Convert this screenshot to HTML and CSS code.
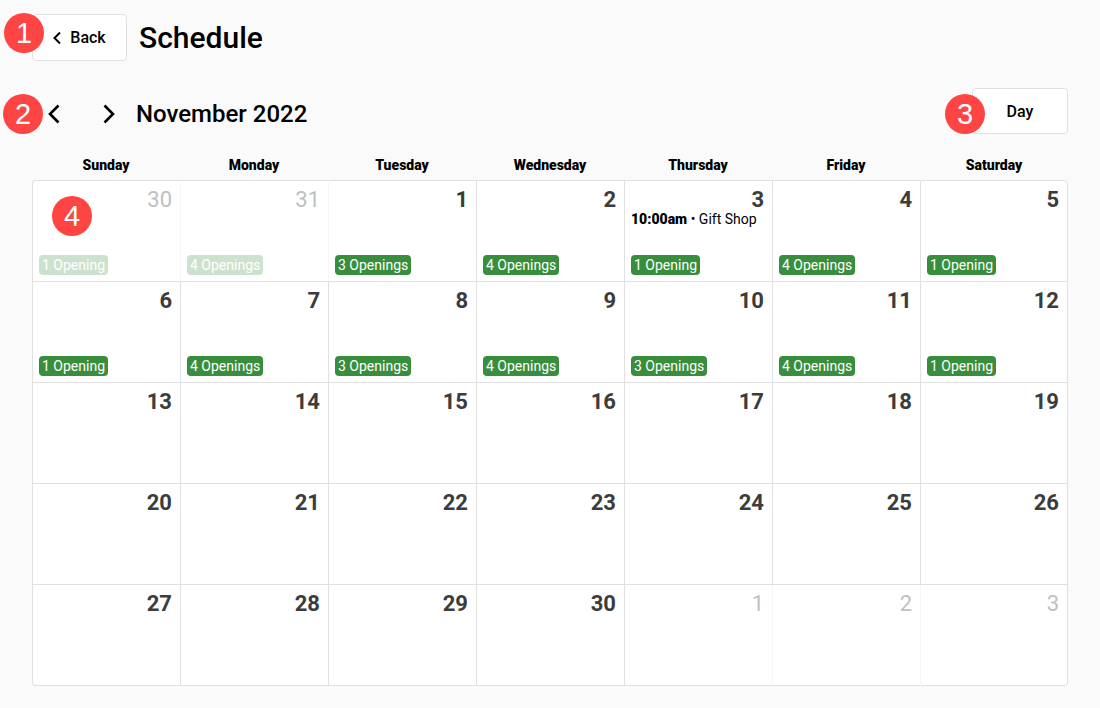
FILE: index.html
```html
<!DOCTYPE html>
<html lang="en">
<head>
    <meta charset="UTF-8">
    <meta name="viewport" content="width=device-width, initial-scale=1.0">
    <title>Schedule</title>
    <link rel="stylesheet" href="styles.css">
</head>
<body>
    <header class="page-header">
        <div class="marked">
            <button type="button" class="btn back-btn">
                <svg class="back-icon" viewBox="0 0 8 12" aria-hidden="true"><path d="M7 0.5 L1.5 6 L7 11.5"/></svg>
                Back
            </button>
            <span class="marker marker-back">1</span>
        </div>
        <h1>Schedule</h1>
    </header>

    <main>
        <div class="toolbar">
            <div class="marked month-nav">
                <button type="button" class="nav-btn" aria-label="Previous month">
                    <svg class="nav-icon" viewBox="0 0 12 20" aria-hidden="true"><path d="M10.5 1.5 L2 10 L10.5 18.5"/></svg>
                </button>
                <button type="button" class="nav-btn" aria-label="Next month">
                    <svg class="nav-icon" viewBox="0 0 12 20" aria-hidden="true"><path d="M1.5 1.5 L10 10 L1.5 18.5"/></svg>
                </button>
                <span class="marker marker-nav">2</span>
            </div>
            <h2>November 2022</h2>
            <div class="marked view-switch">
                <button type="button" class="btn">Day</button>
                <span class="marker marker-view">3</span>
            </div>
        </div>

        <table class="calendar">
            <thead>
                <tr>
                    <th>Sunday</th>
                    <th>Monday</th>
                    <th>Tuesday</th>
                    <th>Wednesday</th>
                    <th>Thursday</th>
                    <th>Friday</th>
                    <th>Saturday</th>
                </tr>
            </thead>
            <tbody>
                <tr>
                    <td class="other-month"><div class="day"><span class="date">30</span><span class="openings">1 Opening</span><span class="marker marker-cell">4</span></div></td>
                    <td class="other-month"><div class="day"><span class="date">31</span><span class="openings">4 Openings</span></div></td>
                    <td><div class="day"><span class="date">1</span><span class="openings">3 Openings</span></div></td>
                    <td><div class="day"><span class="date">2</span><span class="openings">4 Openings</span></div></td>
                    <td>
                        <div class="day">
                            <span class="date">3</span>
                            <p class="event"><b>10:00am</b> • Gift Shop</p>
                            <span class="openings">1 Opening</span>
                        </div>
                    </td>
                    <td><div class="day"><span class="date">4</span><span class="openings">4 Openings</span></div></td>
                    <td><div class="day"><span class="date">5</span><span class="openings">1 Opening</span></div></td>
                </tr>
                <tr>
                    <td><div class="day"><span class="date">6</span><span class="openings">1 Opening</span></div></td>
                    <td><div class="day"><span class="date">7</span><span class="openings">4 Openings</span></div></td>
                    <td><div class="day"><span class="date">8</span><span class="openings">3 Openings</span></div></td>
                    <td><div class="day"><span class="date">9</span><span class="openings">4 Openings</span></div></td>
                    <td><div class="day"><span class="date">10</span><span class="openings">3 Openings</span></div></td>
                    <td><div class="day"><span class="date">11</span><span class="openings">4 Openings</span></div></td>
                    <td><div class="day"><span class="date">12</span><span class="openings">1 Opening</span></div></td>
                </tr>
                <tr>
                    <td><div class="day"><span class="date">13</span></div></td>
                    <td><div class="day"><span class="date">14</span></div></td>
                    <td><div class="day"><span class="date">15</span></div></td>
                    <td><div class="day"><span class="date">16</span></div></td>
                    <td><div class="day"><span class="date">17</span></div></td>
                    <td><div class="day"><span class="date">18</span></div></td>
                    <td><div class="day"><span class="date">19</span></div></td>
                </tr>
                <tr>
                    <td><div class="day"><span class="date">20</span></div></td>
                    <td><div class="day"><span class="date">21</span></div></td>
                    <td><div class="day"><span class="date">22</span></div></td>
                    <td><div class="day"><span class="date">23</span></div></td>
                    <td><div class="day"><span class="date">24</span></div></td>
                    <td><div class="day"><span class="date">25</span></div></td>
                    <td><div class="day"><span class="date">26</span></div></td>
                </tr>
                <tr>
                    <td><div class="day"><span class="date">27</span></div></td>
                    <td><div class="day"><span class="date">28</span></div></td>
                    <td><div class="day"><span class="date">29</span></div></td>
                    <td><div class="day"><span class="date">30</span></div></td>
                    <td class="other-month"><div class="day"><span class="date">1</span></div></td>
                    <td class="other-month"><div class="day"><span class="date">2</span></div></td>
                    <td class="other-month"><div class="day"><span class="date">3</span></div></td>
                </tr>
            </tbody>
        </table>
    </main>
</body>
</html>
```
FILE: styles.css
```css
* {
    box-sizing: border-box;
}

body {
    margin: 0;
    padding: 14px 32px 22px;
    background-color: #fafafa;
    color: #000;
    font-family: Roboto, sans-serif;
    font-size: 14px;
}

h1, h2, p {
    margin: 0;
}

h1 {
    font-size: 30px;
    line-height: 40px;
    font-weight: 500;
}

h2 {
    font-size: 24px;
    line-height: 32px;
    font-weight: 500;
}

.page-header {
    display: flex;
    align-items: center;
    gap: 12px;
}

/* Buttons */
.btn {
    display: flex;
    align-items: center;
    justify-content: center;
    gap: 9px;
    width: 96px;
    height: 46px;
    padding: 0;
    background-color: #fff;
    border: 1px solid #e0e0e0;
    border-radius: 4px;
    color: #000;
    font-family: inherit;
    font-size: 16px;
    font-weight: 500;
    cursor: pointer;
}

.back-btn {
    width: 95px;
    height: 47px;
}

.back-icon {
    width: 8px;
    height: 12px;
    fill: none;
    stroke: #000;
    stroke-width: 2;
}

.nav-btn {
    display: flex;
    padding: 0;
    background: none;
    border: none;
    cursor: pointer;
}

.nav-icon {
    width: 12px;
    height: 20px;
    fill: none;
    stroke: #000;
    stroke-width: 2.6;
}

/* Month row */
.toolbar {
    display: flex;
    align-items: center;
    margin-top: 27px;
}

.month-nav {
    display: flex;
    gap: 43px;
    padding: 6px 21px 0 16px;
}

.toolbar h2 {
    padding-top: 6px;
}

.view-switch {
    margin-left: auto;
}

/* Numbered markers lying over the controls */
.marked {
    position: relative;
}

.marker {
    position: absolute;
    width: 40px;
    height: 40px;
    border-radius: 50%;
    background-color: #ff4444;
    color: #fff;
    font-family: "Liberation Sans", Arial, sans-serif;
    font-size: 29px;
    line-height: 41px;
    text-align: center;
}

.marker-back {
    top: -1px;
    left: -28px;
}

.marker-nav {
    top: -4px;
    left: -29px;
}

.marker-view {
    top: 6px;
    left: -27px;
}

.marker-cell {
    top: 15px;
    left: 19px;
}

/* Calendar */
.calendar {
    width: 100%;
    margin-top: 16px;
    table-layout: fixed;
    border-collapse: separate;
    border-spacing: 0;
}

.calendar th {
    height: 30px;
    padding: 0;
    font-weight: 900;
}

.calendar td {
    padding: 0;
    background-color: #fff;
    border-left: 1px solid #e0e0e0;
    border-bottom: 1px solid #e0e0e0;
}

.calendar td:last-child {
    border-right: 1px solid #e0e0e0;
}

.calendar tbody tr:first-child td {
    border-top: 1px solid #e0e0e0;
}

.calendar .other-month + td {
    border-left-color: #f7f7f7;
}

.calendar tbody tr:first-child td:first-child {
    border-top-left-radius: 4px;
}

.calendar tbody tr:first-child td:last-child {
    border-top-right-radius: 4px;
}

.calendar tbody tr:last-child td:first-child {
    border-bottom-left-radius: 4px;
}

.calendar tbody tr:last-child td:last-child {
    border-bottom-right-radius: 4px;
}

.day {
    position: relative;
    display: flex;
    flex-direction: column;
    height: 100px;
    padding: 6px;
}

.date {
    padding-right: 2px;
    color: #3c3c3c;
    font-size: 22px;
    line-height: 26px;
    font-weight: 700;
    text-align: right;
}

.event {
    line-height: 13px;
    white-space: nowrap;
}

.event b {
    font-weight: 900;
}

.openings {
    align-self: flex-start;
    margin-top: auto;
    padding: 0 3px;
    background-color: #388e3c;
    border-radius: 4px;
    color: #fff;
    line-height: 20px;
}

.other-month .date {
    color: #c0c0c0;
    font-weight: 400;
}

.other-month .openings {
    background-color: #cde2ce;
}
```
